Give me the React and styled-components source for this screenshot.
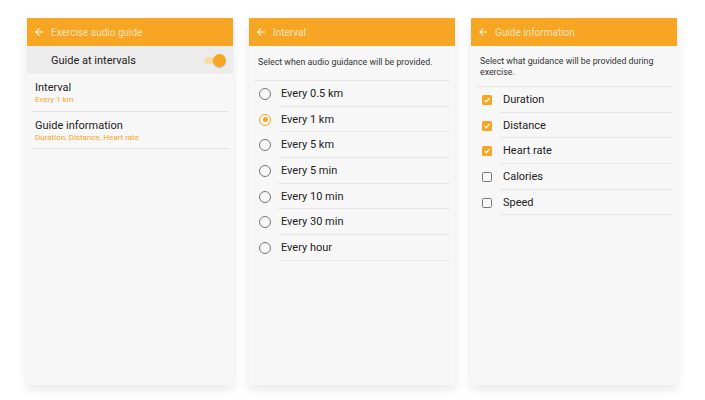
import styled, { createGlobalStyle } from "styled-components";

const orange = "#f6a623";

const GlobalStyle = createGlobalStyle`
  body {
    margin: 0;
    background: #ffffff;
    font-family: Roboto, "Liberation Sans", sans-serif;
  }
`;

const Page = styled.div`
  display: flex;
  gap: 16px;
  padding: 18px 0 0 27px;
  width: 705px;
  height: 400px;
  box-sizing: border-box;
`;

const Panel = styled.div`
  width: 206px;
  height: 367px;
  background: #f7f7f7;
  box-shadow: 0 4px 10px rgba(0, 0, 0, 0.1);
  display: flex;
  flex-direction: column;
`;

const Header = styled.div`
  height: 28px;
  background: ${orange};
  display: flex;
  align-items: center;
  padding-left: 6px;
  gap: 6px;
  color: rgba(255, 255, 255, 0.68);
  font-size: 10px;
`;

const ToggleRow = styled.div`
  height: 28px;
  background: #ececec;
  display: flex;
  align-items: center;
  justify-content: space-between;
  padding: 0 9px 0 24px;
  font-size: 11px;
  color: #222;
`;

const Track = styled.div`
  position: relative;
  width: 16px;
  height: 7px;
  border-radius: 4px;
  background: #f8dca6;
  margin-right: 4px;
`;

const Thumb = styled.div`
  position: absolute;
  right: -6px;
  top: -3px;
  width: 13px;
  height: 13px;
  border-radius: 50%;
  background: ${orange};
  box-shadow: 0 1px 1px rgba(0, 0, 0, 0.2);
`;

const MenuItem = styled.div`
  margin: 0 4px 0 5px;
  padding: 7px 3px 5.5px;
  border-bottom: 1px solid #e4e4e4;
`;

const ItemTitle = styled.div`
  font-size: 11px;
  color: #222;
  line-height: 14px;
`;

const ItemSub = styled.div`
  font-size: 8px;
  color: ${orange};
  line-height: 10px;
`;

const Desc = styled.div`
  margin: 0 5px 0 5px;
  padding: ${(p) => (p.$two ? "10px 4px 8px" : "11px 4px 12px")};
  font-size: 8.8px;
  line-height: 11px;
  color: #333;
  border-bottom: 1px solid #e6e6e6;
`;

const OptionRow = styled.div`
  display: flex;
  align-items: stretch;
  height: 25.7px;
  padding-left: ${(p) => p.$pad}px;
`;

const Marker = styled.div`
  width: ${(p) => p.$w}px;
  display: flex;
  align-items: center;
  flex-shrink: 0;
`;

const OptionLabel = styled.div`
  flex: 1;
  display: flex;
  align-items: center;
  font-size: 11px;
  color: #222;
  border-bottom: 1px solid #e6e6e6;
  margin-right: 5px;
  padding-left: 3px;
`;

const Radio = styled.div`
  width: 10px;
  height: 10px;
  border-radius: 50%;
  border: 1.3px solid ${(p) => (p.$on ? orange : "#777")};
  display: flex;
  align-items: center;
  justify-content: center;
  &::after {
    content: "";
    width: 5px;
    height: 5px;
    border-radius: 50%;
    background: ${(p) => (p.$on ? orange : "transparent")};
  }
`;

const Check = styled.div`
  width: 10px;
  height: 10px;
  border-radius: 1.5px;
  box-sizing: border-box;
  background: ${(p) => (p.$on ? orange : "transparent")};
  border: ${(p) => (p.$on ? "none" : "1.3px solid #777")};
  display: flex;
  align-items: center;
  justify-content: center;
`;

const Back = () => (
  <svg width="12" height="12" viewBox="0 0 24 24">
    <path
      d="M20 11H7.83l5.59-5.59L12 4l-8 8 8 8 1.41-1.41L7.83 13H20v-2z"
      fill="rgba(255,255,255,0.92)"
    />
  </svg>
);

const Tick = () => (
  <svg width="8" height="8" viewBox="0 0 10 10">
    <path d="M2 5.2l2 2 4-4.4" fill="none" stroke="#fff" strokeWidth="1.5" />
  </svg>
);

const intervals = [
  "Every 0.5 km",
  "Every 1 km",
  "Every 5 km",
  "Every 5 min",
  "Every 10 min",
  "Every 30 min",
  "Every hour",
];

const infos = [
  ["Duration", true],
  ["Distance", true],
  ["Heart rate", true],
  ["Calories", false],
  ["Speed", false],
];

export default function App() {
  return (
    <>
      <GlobalStyle />
      <Page>
        <Panel>
          <Header>
            <Back />
            Exercise audio guide
          </Header>
          <ToggleRow>
            Guide at intervals
            <Track>
              <Thumb />
            </Track>
          </ToggleRow>
          <MenuItem>
            <ItemTitle>Interval</ItemTitle>
            <ItemSub>Every 1 km</ItemSub>
          </MenuItem>
          <MenuItem>
            <ItemTitle>Guide information</ItemTitle>
            <ItemSub>Duration, Distance, Heart rate</ItemSub>
          </MenuItem>
        </Panel>

        <Panel>
          <Header>
            <Back />
            Interval
          </Header>
          <Desc>Select when audio guidance will be provided.</Desc>
          {intervals.map((t) => (
            <OptionRow key={t} $pad={10}>
              <Marker $w={19}>
                <Radio $on={t === "Every 1 km"} />
              </Marker>
              <OptionLabel>{t}</OptionLabel>
            </OptionRow>
          ))}
        </Panel>

        <Panel>
          <Header>
            <Back />
            Guide information
          </Header>
          <Desc $two>Select what guidance will be provided during exercise.</Desc>
          {infos.map(([t, on]) => (
            <OptionRow key={t} $pad={11}>
              <Marker $w={18}>
                <Check $on={on}>{on && <Tick />}</Check>
              </Marker>
              <OptionLabel>{t}</OptionLabel>
            </OptionRow>
          ))}
        </Panel>
      </Page>
    </>
  );
}
